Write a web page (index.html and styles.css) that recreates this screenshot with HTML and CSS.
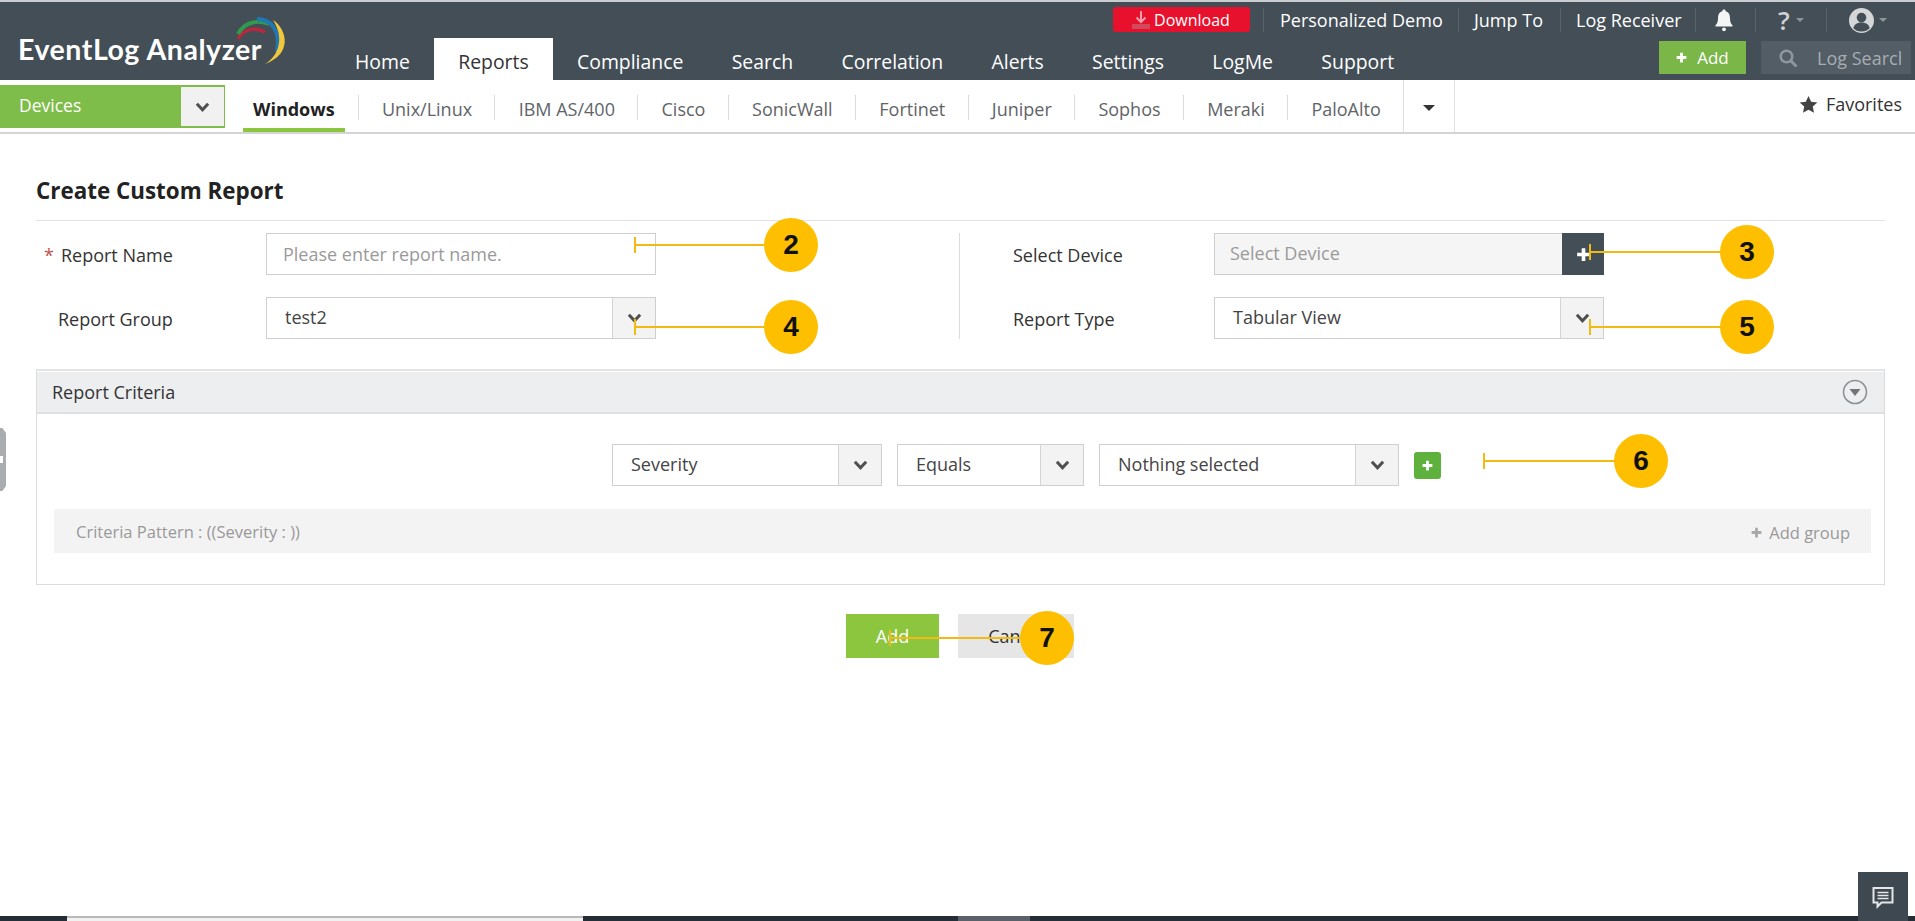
FILE: index.html
```html
<!DOCTYPE html>
<html lang="en">
<head>
<meta charset="utf-8">
<title>Create Custom Report</title>
<link rel="stylesheet" href="styles.css">
</head>
<body>
<svg class="defs" width="0" height="0" aria-hidden="true">
  <symbol id="chev" viewBox="0 0 16 12"><path d="M2 2.500 8 9 14 2.500" fill="none" stroke="currentColor" stroke-width="3.200"/></symbol>
  <symbol id="plus" viewBox="0 0 16 16"><path d="M8 2v12M2 8h12" fill="none" stroke="currentColor" stroke-width="3.400"/></symbol>
</svg>
<header class="header">
  <div class="brand">
    <span class="brand-name">EventLog Analyzer</span>
    <svg class="brand-arcs" viewBox="0 0 64 60" width="64" height="60" aria-hidden="true">
      <path d="M8 29C13 20 24 16 35 22" fill="none" stroke="#b5283f" stroke-width="3.600"/>
      <path d="M8 24C14 13 26 9 39 14" fill="none" stroke="#2f9a4d" stroke-width="4"/>
      <path d="M27 9C40 9 51 19 47 42" fill="none" stroke="#1f78b4" stroke-width="3.800"/>
      <path d="M43 10C57 19 63 44 35 54C50 45 54 27 43 10Z" fill="#f1c83c"/>
    </svg>
  </div>
  <div class="header-main">
    <div class="util">
      <a class="download">
        <svg viewBox="0 0 22 22" width="22" height="22" aria-hidden="true"><path d="M11 2v10M6.500 8.500 11 13l4.500-4.500" fill="none" stroke="#f2a0ac" stroke-width="2"/><path d="M2 15h18v5H2z" fill="#d2495c"/></svg>
        <span>Download</span>
      </a>
      <a class="util-item util-demo">Personalized Demo</a>
      <a class="util-item util-jump">Jump To</a>
      <a class="util-item util-log">Log Receiver</a>
      <a class="util-icon util-bell">
        <svg viewBox="0 0 20 24" width="20" height="24" aria-hidden="true"><path d="M10 1.500c1 0 1.700.7 1.700 1.700 3.300.8 4.300 3.500 4.300 7 0 3.500.8 5.500 2.500 7v1.300h-17v-1.300c1.700-1.500 2.500-3.500 2.500-7 0-3.500 1-6.200 4.300-7 0-1 .7-1.700 1.700-1.700z" fill="#f4f5f5"/><circle cx="10" cy="21.300" r="1.900" fill="#f4f5f5"/></svg>
      </a>
      <a class="util-icon util-help"><span class="help-mark">?</span><i class="caret"></i></a>
      <a class="util-user">
        <svg viewBox="0 0 26 26" width="25" height="25" aria-hidden="true"><circle cx="13" cy="13" r="13" fill="#d4d6d8"/><circle cx="13" cy="10" r="5" fill="#434e57"/><path d="M4.500 21c1-4.500 4.500-6 8.500-6s7.500 1.500 8.500 6c-2 2-5 3.500-8.500 3.500S6.500 23 4.500 21z" fill="#434e57"/></svg>
        <i class="caret"></i>
      </a>
    </div>
    <nav class="nav">
      <a class="nav-item">Home</a>
      <a class="nav-item active">Reports</a>
      <a class="nav-item">Compliance</a>
      <a class="nav-item">Search</a>
      <a class="nav-item">Correlation</a>
      <a class="nav-item">Alerts</a>
      <a class="nav-item">Settings</a>
      <a class="nav-item">LogMe</a>
      <a class="nav-item">Support</a>
      <a class="add-btn"><svg class="add-plus"><use href="#plus"/></svg>Add</a>
      <div class="log-search">
        <svg viewBox="0 0 20 20" width="20" height="20" aria-hidden="true"><circle cx="8.500" cy="8.500" r="5.800" fill="none" stroke="#8f979d" stroke-width="2.600"/><path d="m13 13 5.500 5.500" stroke="#8f979d" stroke-width="3"/></svg>
        <span class="log-search-text">Log Search</span>
      </div>
    </nav>
  </div>
</header>

<div class="subbar">
  <div class="devices">
    <span class="devices-label">Devices</span>
    <span class="devices-arrow"><svg class="chev"><use href="#chev"/></svg></span>
  </div>
  <div class="tabs">
    <a class="tab active">Windows</a>
    <a class="tab">Unix/Linux</a>
    <a class="tab">IBM AS/400</a>
    <a class="tab">Cisco</a>
    <a class="tab">SonicWall</a>
    <a class="tab">Fortinet</a>
    <a class="tab">Juniper</a>
    <a class="tab">Sophos</a>
    <a class="tab">Meraki</a>
    <a class="tab tab-last">PaloAlto</a>
    <a class="tab-more"><i class="tri"></i></a>
  </div>
  <a class="favorites">
    <svg viewBox="0 0 20 20" width="19" height="19" aria-hidden="true"><path d="m10 1 2.800 6 6.500.8-4.800 4.400 1.300 6.500L10 15.400 4.200 18.700l1.300-6.500L.7 7.800 7.200 7z" fill="#444"/></svg>
    Favorites
  </a>
</div>

<main class="main">
  <h1 class="title">Create Custom Report</h1>
  <div class="form">
    <div class="form-col form-left">
      <div class="field">
        <label class="label"><span class="req">*</span>Report Name</label>
        <div class="control"><span class="placeholder">Please enter report name.</span></div>
      </div>
      <div class="field">
        <label class="label label-indent">Report Group</label>
        <div class="control control-select"><span class="value">test2</span><span class="arrow"><svg class="chev"><use href="#chev"/></svg></span></div>
      </div>
    </div>
    <div class="form-col form-right">
      <div class="field">
        <label class="label">Select Device</label>
        <div class="control control-disabled"><span class="placeholder">Select Device</span><span class="plus-box"><svg class="plus-icon"><use href="#plus"/></svg></span></div>
      </div>
      <div class="field">
        <label class="label">Report Type</label>
        <div class="control control-select"><span class="value">Tabular View</span><span class="arrow"><svg class="chev"><use href="#chev"/></svg></span></div>
      </div>
    </div>
  </div>

  <section class="panel">
    <div class="panel-head">
      <span>Report Criteria</span>
      <svg viewBox="0 0 26 26" width="26" height="26" aria-hidden="true"><circle cx="13" cy="13" r="11.500" fill="none" stroke="#8e9295" stroke-width="1.600"/><path d="M7.500 10h11L13 17z" fill="#70757a"/></svg>
    </div>
    <div class="panel-body">
      <div class="criteria">
        <div class="control control-select crit-1"><span class="value">Severity</span><span class="arrow"><svg class="chev"><use href="#chev"/></svg></span></div>
        <div class="control control-select crit-2"><span class="value">Equals</span><span class="arrow"><svg class="chev"><use href="#chev"/></svg></span></div>
        <div class="control control-select crit-3"><span class="value">Nothing selected</span><span class="arrow"><svg class="chev"><use href="#chev"/></svg></span></div>
        <span class="crit-add"><svg class="crit-plus"><use href="#plus"/></svg></span>
      </div>
      <div class="pattern">
        <span>Criteria Pattern : ((Severity : ))</span>
        <span class="add-group"><svg class="group-plus"><use href="#plus"/></svg>Add group</span>
      </div>
    </div>
  </section>

  <div class="actions">
    <button class="btn btn-add">Add</button>
    <button class="btn btn-cancel">Cancel</button>
  </div>
</main>

<footer class="taskbar">
  <span class="task-white"></span>
  <span class="task-mid"></span>
</footer>

<div class="handle"></div>
<a class="chat">
  <svg viewBox="0 0 24 24" width="24" height="24" aria-hidden="true"><path d="M2.500 3h19v14.500h-11l-4 4v-4h-4z" fill="none" stroke="#e4e6e8" stroke-width="2"/><path d="M6.500 7.500h11M6.500 10.500h11M6.500 13.500h11" stroke="#e4e6e8" stroke-width="1.600"/></svg>
</a>

<div class="callout c2"><i class="tick"></i><i class="line"></i><b class="num">2</b></div>
<div class="callout c3"><i class="tick"></i><i class="line"></i><b class="num">3</b></div>
<div class="callout c4"><i class="tick"></i><i class="line"></i><b class="num">4</b></div>
<div class="callout c5"><i class="tick"></i><i class="line"></i><b class="num">5</b></div>
<div class="callout c6"><i class="tick"></i><i class="line"></i><b class="num">6</b></div>
<div class="callout c7"><i class="tick"></i><i class="line"></i><b class="num">7</b></div>
</body>
</html>
```

FILE: styles.css
```css
* { box-sizing: border-box; }
html, body { height: 100%; }
body {
  margin: 0;
  display: flex;
  flex-direction: column;
  height: 921px;
  overflow: hidden;
  position: relative;
  background: #fff;
  color: #333;
  font-family: "Open Sans", "Liberation Sans", sans-serif;
  font-size: 18px;
}
.defs { position: absolute; }
a { color: inherit; text-decoration: none; }
i { font-style: normal; }

/* Header */
.header {
  display: flex;
  height: 80px;
  flex: none;
  background: #434e57;
  border-top: 2px solid #c9cdd0;
  color: #fff;
}
.brand { width: 331px; flex: none; position: relative; padding: 32px 0 0 18px; }
.brand-name {
  font-family: Lato, "Open Sans", sans-serif;
  font-weight: 700;
  font-size: 28.500px;
  line-height: 30px;
  letter-spacing: .55px;
  white-space: nowrap;
}
.brand-arcs { position: absolute; left: 230px; top: 8px; }
.header-main { flex: 1; display: flex; flex-direction: column; min-width: 0; }
.util { height: 36px; display: flex; align-items: center; padding-left: 782px; }
.download {
  width: 137px; height: 25px; margin-top: -1px;
  display: flex; align-items: center; justify-content: center; gap: 2px;
  background: #e8112d;
  border-radius: 3px;
  font-size: 16px;
  padding-right: 3px;
}
.util-item { display: flex; align-items: center; height: 24px; font-size: 18px; border-left: 1px solid #59636b; white-space: nowrap; }
.util-demo { margin-left: 13px; padding-left: 16px; width: 195px; }
.util-jump { padding-left: 15px; width: 102px; }
.util-log { padding-left: 15px; width: 135px; }
.util-icon { display: flex; align-items: center; height: 24px; border-left: 1px solid #59636b; }
.util-bell { width: 60px; padding-left: 18px; }
.util-help { width: 71px; padding-left: 22px; gap: 6px; }
.help-mark { font-size: 26px; font-weight: 600; color: #cfd2d4; }
.util-user { display: flex; align-items: center; gap: 5px; height: 24px; border-left: 1px solid #59636b; padding-left: 22px; }
.caret { width: 0; height: 0; border: 4px solid transparent; border-top-color: #8d959b; border-bottom: 0; }

.nav { flex: 1; display: flex; align-items: stretch; }
.nav-item {
  display: flex; align-items: center;
  padding: 4px 24.200px 0;
  font-size: 19.400px;
  white-space: nowrap;
}
.nav-item:first-child { padding-left: 24px; }
.nav-item.active { background: #fff; color: #333; }
.add-btn {
  width: 87px; height: 33px; margin: 3px 0 0 auto;
  display: flex; align-items: center; justify-content: center; gap: 9px;
  background: #7ab648;
  font-size: 17px;
  padding-right: 1px;
}
.add-plus { width: 13px; height: 13px; color: #fff; }
.log-search {
  width: 150px; height: 33px; margin: 3px 4px 0 15px;
  display: flex; align-items: center; gap: 19px;
  padding-left: 17px;
  background: #535d66;
  color: #a6adb2;
  flex: none;
}
.log-search svg { flex: none; }
.log-search-text { white-space: nowrap; font-size: 18px; width: 84px; overflow: hidden; }

/* Sub bar */
.subbar {
  height: 54px; flex: none;
  display: flex;
  border-bottom: 2px solid #d2d4d6;
}
.devices {
  width: 225px; height: 43px; margin-top: 5px;
  display: flex;
  background: #7fbd4a;
  padding: 2px 1px 2px 0;
  flex: none;
}
.devices-label { flex: 1; color: #fff; font-size: 17.500px; padding-left: 19px; line-height: 37px; }
.devices-arrow { width: 43px; background: #f1f1f1; display: flex; align-items: center; justify-content: center; color: #4f4f4f; }
.chev { width: 15px; height: 12px; }
.tabs { display: flex; align-items: stretch; margin-left: 18px; }
.tab {
  position: relative;
  display: flex; align-items: center;
  padding: 5px 23.300px 0;
  font-size: 18px;
  color: #5f6468;
  white-space: nowrap;
}
.tab::after {
  content: "";
  position: absolute; right: 0; top: 15px; height: 25px;
  border-right: 1px solid #dcdcdc;
}
.tab.active {
  color: #222;
  font-weight: 700;
  padding: 9px 10px 0;
  margin-right: 14px;
  border-bottom: 4px solid #8cc63f;
}
.tab.active::after { right: -14px; }
.tab-last::after { top: 0; height: 100%; border-color: #e0e0e0; }
.tab-more { width: 51px; display: flex; align-items: center; justify-content: center; border-right: 1px solid #e0e0e0; padding-top: 3px; }
.tri { width: 0; height: 0; border: 6px solid transparent; border-top: 6px solid #333; border-bottom: 0; }
.favorites {
  margin-left: auto;
  display: flex; align-items: center; gap: 8px;
  padding: 0 13px 4px 0;
  font-size: 18px;
  color: #333;
}

/* Main */
.main { flex: 1; padding: 0 30px 0 36px; min-height: 0; }
.title {
  margin: 0;
  padding-top: 42px;
  height: 87px;
  border-bottom: 1px solid #e2e2e2;
  font-size: 22.400px;
  font-weight: 700;
  line-height: 30px;
  color: #222;
}
.form { display: flex; margin-top: 12px; }
.form-col { display: flex; flex-direction: column; gap: 22px; }
.form-left { width: 924px; padding-left: 8px; border-right: 1px solid #dcdcdc; }
.form-right { flex: 1; padding-left: 53px; }
.field { display: flex; align-items: center; height: 42px; }
.label { flex: none; font-size: 18px; color: #333; padding-top: 2px; }
.form-left .label { width: 222px; }
.form-right .label { width: 201px; }
.label-indent { padding-left: 14px; }
.req { color: #c0504d; margin-right: 7px; }
.control {
  width: 390px; height: 42px;
  display: flex; align-items: center;
  border: 1px solid #cfcfcf;
  background: #fff;
  padding-left: 16px;
  font-size: 18px;
}
.placeholder { color: #9a9a9a; padding-bottom: 1px; }
.control-select { padding-left: 18px; }
.control-disabled { background: #f5f5f5; padding-left: 15px; }
.control-disabled .placeholder { flex: 1; padding-bottom: 2px; }
.value { flex: 1; color: #444; padding-bottom: 2px; }
.arrow {
  width: 43px; height: 40px;
  display: flex; align-items: center; justify-content: center;
  background: #f3f3f3;
  border-left: 1px solid #d4d4d4;
  color: #4f4f4f;
}
.plus-box {
  width: 42px; height: 42px; margin-right: -1px;
  display: flex; align-items: center; justify-content: center;
  background: #434e57; color: #fff;
}
.plus-icon { width: 17px; height: 17px; }

.panel {
  margin-top: 30px;
  height: 216px;
  border: 1px solid #dcdcdc;
  border-top: 2px solid #e4e4e4;
  padding-top: 1px;
}
.panel-head {
  height: 42px;
  display: flex; align-items: center; justify-content: space-between;
  background: #edeef0;
  border-bottom: 2px solid #dfe0e2;
  padding: 0 16px 0 15px;
  font-size: 18px;
  color: #333;
}
.panel-body { padding: 30px 13px 0 17px; }
.criteria { display: flex; align-items: center; padding-left: 558px; gap: 15px; }
.crit-1 { width: 270px; }
.crit-2 { width: 187px; }
.crit-3 { width: 300px; }
.crit-add {
  width: 27px; height: 27px;
  display: flex; align-items: center; justify-content: center;
  background: #5fb13d; border-radius: 3px; color: #fff;
}
.crit-plus { width: 13px; height: 13px; }
.pattern {
  margin-top: 23px;
  height: 44px;
  display: flex; align-items: center; justify-content: space-between;
  padding: 0 21px 0 22px;
  background: #f3f3f3;
  color: #999;
  font-size: 16.500px;
}
.add-group { display: flex; align-items: center; gap: 6px; padding-top: 3px; }
.group-plus { width: 13px; height: 13px; color: #a8a8a8; }

.actions { display: flex; justify-content: center; gap: 19px; margin-top: 29px; padding-right: 1px; }
.btn {
  height: 44px;
  border: 0;
  font-family: inherit;
  font-size: 18px;
  padding: 0;
}
.btn-add { width: 93px; background: #8cc63f; color: #fff; }
.btn-cancel { width: 116px; background: #e6e6e6; color: #333; }

/* Bottom */
.taskbar { height: 5px; flex: none; display: flex; background: #252d36; position: relative; }
.task-white { margin-left: 67px; width: 516px; background: #f1f1f1; border-top: 2px solid #b9b9b9; }
.task-mid { margin-left: 375px; width: 72px; background: #5a6168; }

.handle {
  position: absolute; left: 0; top: 428px;
  width: 6px; height: 63px;
  background: #a9adb0;
  clip-path: polygon(0 0, 40% 0, 100% 8%, 100% 92%, 40% 100%, 0 100%);
}
.handle::after {
  content: "";
  position: absolute; left: 0; top: 28px;
  width: 3px; height: 7px;
  background: #fff;
}
.chat {
  position: absolute; right: 7px; bottom: 0;
  width: 50px; height: 49px;
  display: flex; align-items: center; justify-content: center;
  background: #3d4850;
}

/* Callouts */
.callout { position: absolute; height: 54px; }
.callout .tick { position: absolute; left: 0; top: 19px; width: 2px; height: 16px; background: #f2bb13; }
.callout .line { position: absolute; left: 0; right: 27px; top: 26px; height: 2px; background: #f2bb13; }
.callout .num {
  position: absolute; right: 0; top: 0;
  width: 54px; height: 54px;
  border-radius: 50%;
  background: #fdbf00;
  color: #111;
  font-family: "Liberation Sans", Arial, sans-serif;
  font-size: 28px;
  font-weight: 700;
  line-height: 54px;
  text-align: center;
}
.c2 { left: 634px; top: 218px; width: 184px; }
.c3 { left: 1589px; top: 225px; width: 185px; }
.c4 { left: 634px; top: 300px; width: 184px; }
.c5 { left: 1589px; top: 300px; width: 185px; }
.c6 { left: 1483px; top: 434px; width: 185px; }
.c7 { left: 889px; top: 611px; width: 185px; }
```
